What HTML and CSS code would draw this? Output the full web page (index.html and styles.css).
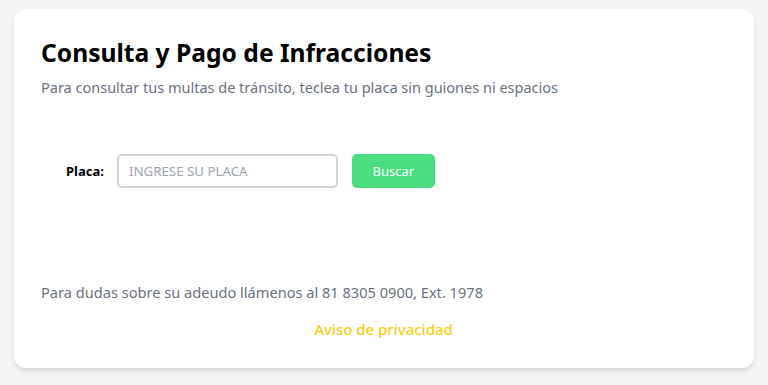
FILE: index.html
```html
<!DOCTYPE html>
<html lang="es">
<head>
<meta charset="utf-8">
<link rel="stylesheet" href="styles.css">
</head>
<body>
<main class="card">
  <h1 class="title">Consulta y Pago de Infracciones</h1>
  <p class="subtitle">Para consultar tus multas de tránsito, teclea tu placa sin guiones ni espacios</p>
  <form class="search">
    <label class="label" for="placa">Placa:</label>
    <input class="input" id="placa" type="text" placeholder="INGRESE SU PLACA">
    <button class="btn" type="button">Buscar</button>
  </form>
  <p class="contact">Para dudas sobre su adeudo llámenos al 81 8305 0900, Ext. 1978</p>
  <a class="privacy" href="#">Aviso de privacidad</a>
</main>
</body>
</html>
```
FILE: styles.css
```css
* { box-sizing: border-box; }
html, body { margin: 0; padding: 0; }
body {
  background: #f3f4f6;
  font-family: "Noto Sans", "Open Sans", sans-serif;
  padding: 9px 14px;
  height: 385px;
}
.card {
  background: #fff;
  border-radius: 12px;
  box-shadow: 0 4px 6px -1px rgba(0,0,0,0.1), 0 2px 4px -2px rgba(0,0,0,0.1);
  width: 740px;
  height: 359px;
  padding: 28px 28px 0 27px;
  display: flex;
  flex-direction: column;
}
.title {
  margin: 0;
  font-size: 24.6px;
  font-weight: 700;
  color: #000;
  line-height: 32px;
}
.subtitle {
  margin: 7px 0 0;
  font-size: 14.5px;
  color: #6b7280;
  line-height: 22px;
}
.search {
  display: flex;
  align-items: center;
  margin: 56px 0 0 25px;
}
.label {
  font-size: 13px;
  font-weight: 700;
  color: #000;
  margin-right: 13px;
}
.input {
  width: 221px;
  height: 34px;
  border: 2px solid #d1d5db;
  border-radius: 5px;
  padding: 0 10px;
  font-family: inherit;
  font-size: 13.3px;
  color: #374151;
  outline: none;
}
.input::placeholder { color: #9ca3af; }
.btn {
  margin-left: 14px;
  width: 83px;
  height: 34px;
  border: none;
  border-radius: 5px;
  background: #4ade80;
  color: #fff;
  font-family: inherit;
  font-size: 13px;
}
.contact {
  margin: 93px 0 0;
  font-size: 14.6px;
  color: #6b7280;
  line-height: 22px;
}
.privacy {
  margin-top: 15px;
  align-self: center;
  color: #facc15;
  font-size: 15px;
  font-weight: 500;
  text-decoration: none;
  line-height: 22px;
}
```
